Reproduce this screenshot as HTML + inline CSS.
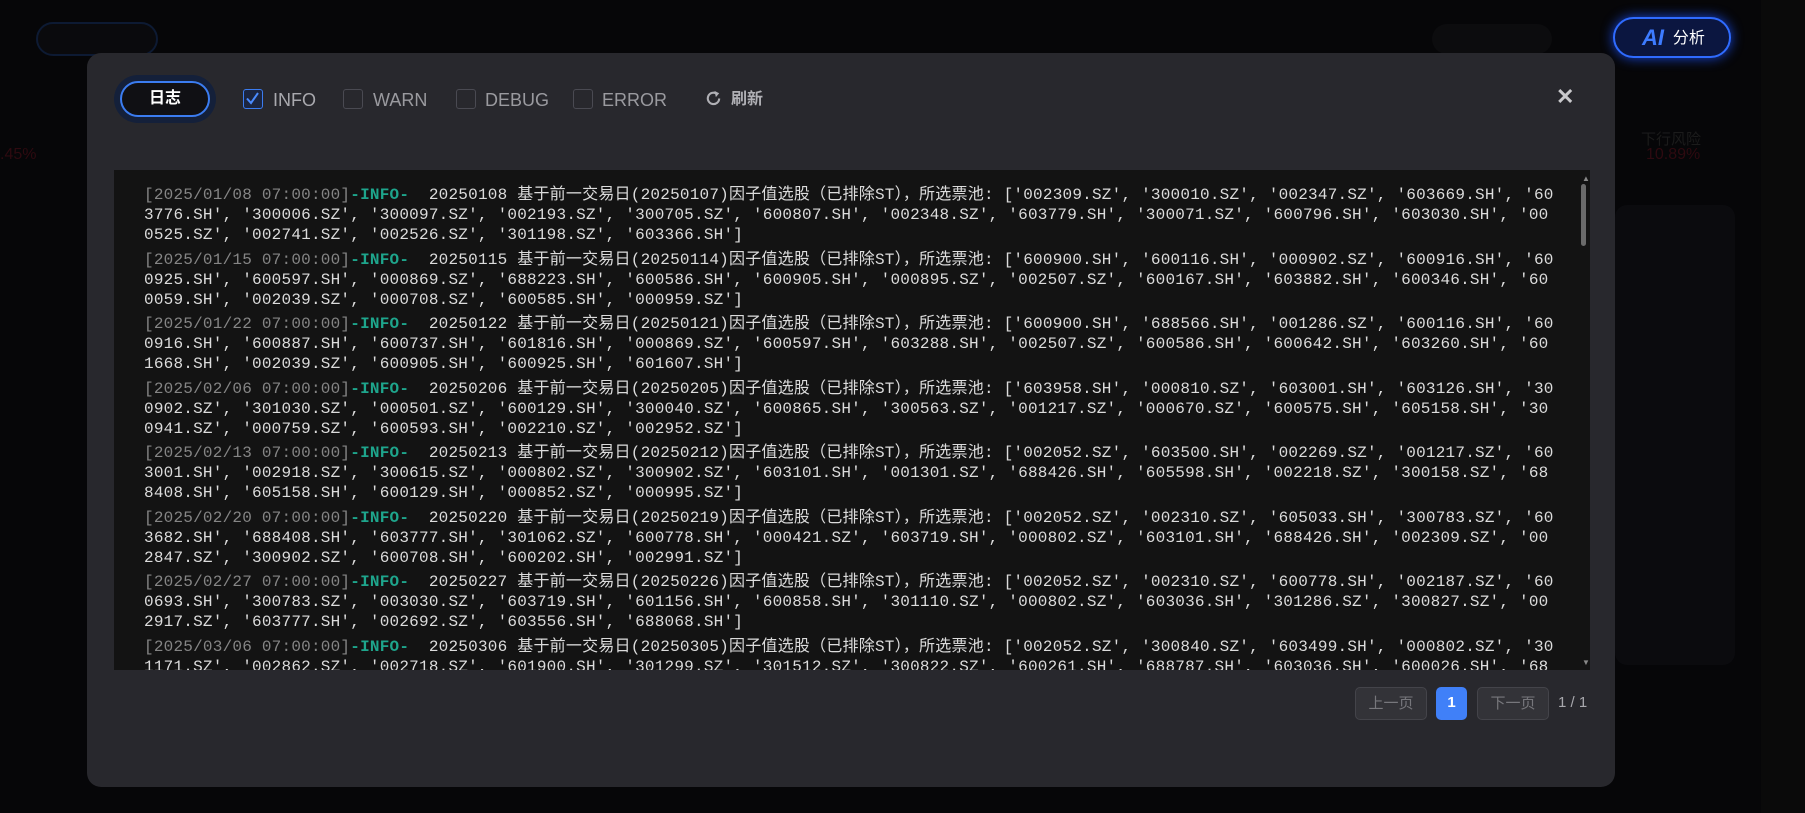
<!DOCTYPE html>
<html><head><meta charset="utf-8"><style>
*{margin:0;padding:0;box-sizing:border-box}
body{width:1805px;height:813px;background:#060608;overflow:hidden;position:relative;font-family:"Liberation Sans","Noto Sans CJK SC",sans-serif}
.abs{position:absolute}
.modal{left:87px;top:53px;width:1528px;height:734px;background:#28282d;border-radius:14px}
.logbtn{left:120px;top:81px;width:90px;height:36px;border-radius:18px;border:2px solid #3b7cf0;background:#101014;color:#fff;font-weight:bold;font-size:16px;text-align:center;line-height:32px;box-shadow:0 0 0 6px #14203a}
.cb{top:89px;width:20px;height:20px;border:1.5px solid #4a4a52;border-radius:3px}
.lbl{top:89px;font-size:18px;color:#9a9a9f;line-height:22px}
.log{left:114px;top:170px;width:1476px;height:500px;background:#131313;overflow:hidden}
.txt{position:absolute;left:30px;top:15px;font-family:"Liberation Mono","Noto Sans CJK SC",monospace;font-size:16px;line-height:20px;color:#dcdcdc;letter-spacing:0.22px}
.e{margin-bottom:4.5px;white-space:pre}
.t{color:#858585}.i{color:#1ea58c;font-weight:bold}
.pg{top:687px;height:33px;border-radius:5px;font-size:15px;text-align:center;line-height:31px}
</style></head><body>
<div class="abs" style="left:36px;top:22px;width:122px;height:34px;border-radius:17px;border:2px solid #0d1a33;background:#0a0a0d"></div>
<div class="abs" style="left:1432px;top:24px;width:120px;height:30px;border-radius:15px;background:#0c0c0e"></div>
<div class="abs" style="left:1641px;top:128px;font-size:15px;color:#1b1b1b">下行风险</div>
<div class="abs" style="left:1646px;top:146px;font-size:16px;color:#2e0a10">10.89%</div>
<div class="abs" style="left:0;top:146px;font-size:16px;color:#2e0a10">.45%</div>
<div class="abs" style="left:1615px;top:205px;width:120px;height:460px;background:#0b0b0e;border-radius:12px"></div>
<div class="abs" style="left:1761px;top:0;width:44px;height:813px;background:#0a0a0a"></div>
<div class="abs" style="left:1613px;top:17px;width:118px;height:41px;border-radius:21px;border:2px solid #2f6bff;background:#0b1640;box-shadow:0 0 12px #1846d8;color:#fff;line-height:37px;padding-left:27px;font-size:16px"><span style="color:#3d7bff;font-style:italic;font-size:22px;font-weight:bold;vertical-align:-2px">AI</span>&nbsp; 分析</div>
<div class="modal abs"></div>
<div class="logbtn abs">日志</div>
<div class="cb abs" style="left:243px;border-color:#3b7cf0;background:#1b2540"><svg width="17" height="17" viewBox="0 0 17 17" style="position:absolute;left:0;top:0"><path d="M3 8.5 L7 13 L14 3" stroke="#4a8bff" stroke-width="2" fill="none"/></svg></div>
<div class="lbl abs" style="left:273px;color:#a9a9ae">INFO</div>
<div class="cb abs" style="left:343px"></div><div class="lbl abs" style="left:373px">WARN</div>
<div class="cb abs" style="left:456px"></div><div class="lbl abs" style="left:485px">DEBUG</div>
<div class="cb abs" style="left:573px"></div><div class="lbl abs" style="left:602px">ERROR</div>
<svg class="abs" style="left:704px;top:89px" width="19" height="19" viewBox="0 0 20 20"><path d="M16 10 A6 6 0 1 1 13.5 5" stroke="#b0b0b5" stroke-width="2.2" fill="none"/><path d="M11 2 L16 4.5 L12.5 8.5 Z" fill="#b0b0b5"/></svg>
<div class="lbl abs" style="left:731px;font-size:16px;color:#b0b0b5;font-weight:bold">刷新</div>
<div class="abs" style="left:1556px;top:84px;color:#c9c9cc;font-size:22px;font-weight:bold">✕</div>
<div class="log abs"><div class="txt">
<div class="e"><span class="t">[2025/01/08 07:00:00]</span><span class="i">-INFO-</span>  20250108 基于前一交易日(20250107)因子值选股（已排除ST），所选票池: ['002309.SZ', '300010.SZ', '002347.SZ', '603669.SH', '60
3776.SH', '300006.SZ', '300097.SZ', '002193.SZ', '300705.SZ', '600807.SH', '002348.SZ', '603779.SH', '300071.SZ', '600796.SH', '603030.SH', '00
0525.SZ', '002741.SZ', '002526.SZ', '301198.SZ', '603366.SH']</div>
<div class="e"><span class="t">[2025/01/15 07:00:00]</span><span class="i">-INFO-</span>  20250115 基于前一交易日(20250114)因子值选股（已排除ST），所选票池: ['600900.SH', '600116.SH', '000902.SZ', '600916.SH', '60
0925.SH', '600597.SH', '000869.SZ', '688223.SH', '600586.SH', '600905.SH', '000895.SZ', '002507.SZ', '600167.SH', '603882.SH', '600346.SH', '60
0059.SH', '002039.SZ', '000708.SZ', '600585.SH', '000959.SZ']</div>
<div class="e"><span class="t">[2025/01/22 07:00:00]</span><span class="i">-INFO-</span>  20250122 基于前一交易日(20250121)因子值选股（已排除ST），所选票池: ['600900.SH', '688566.SH', '001286.SZ', '600116.SH', '60
0916.SH', '600887.SH', '600737.SH', '601816.SH', '000869.SZ', '600597.SH', '603288.SH', '002507.SZ', '600586.SH', '600642.SH', '603260.SH', '60
1668.SH', '002039.SZ', '600905.SH', '600925.SH', '601607.SH']</div>
<div class="e"><span class="t">[2025/02/06 07:00:00]</span><span class="i">-INFO-</span>  20250206 基于前一交易日(20250205)因子值选股（已排除ST），所选票池: ['603958.SH', '000810.SZ', '603001.SH', '603126.SH', '30
0902.SZ', '301030.SZ', '000501.SZ', '600129.SH', '300040.SZ', '600865.SH', '300563.SZ', '001217.SZ', '000670.SZ', '600575.SH', '605158.SH', '30
0941.SZ', '000759.SZ', '600593.SH', '002210.SZ', '002952.SZ']</div>
<div class="e"><span class="t">[2025/02/13 07:00:00]</span><span class="i">-INFO-</span>  20250213 基于前一交易日(20250212)因子值选股（已排除ST），所选票池: ['002052.SZ', '603500.SH', '002269.SZ', '001217.SZ', '60
3001.SH', '002918.SZ', '300615.SZ', '000802.SZ', '300902.SZ', '603101.SH', '001301.SZ', '688426.SH', '605598.SH', '002218.SZ', '300158.SZ', '68
8408.SH', '605158.SH', '600129.SH', '000852.SZ', '000995.SZ']</div>
<div class="e"><span class="t">[2025/02/20 07:00:00]</span><span class="i">-INFO-</span>  20250220 基于前一交易日(20250219)因子值选股（已排除ST），所选票池: ['002052.SZ', '002310.SZ', '605033.SH', '300783.SZ', '60
3682.SH', '688408.SH', '603777.SH', '301062.SZ', '600778.SH', '000421.SZ', '603719.SH', '000802.SZ', '603101.SH', '688426.SH', '002309.SZ', '00
2847.SZ', '300902.SZ', '600708.SH', '600202.SH', '002991.SZ']</div>
<div class="e"><span class="t">[2025/02/27 07:00:00]</span><span class="i">-INFO-</span>  20250227 基于前一交易日(20250226)因子值选股（已排除ST），所选票池: ['002052.SZ', '002310.SZ', '600778.SH', '002187.SZ', '60
0693.SH', '300783.SZ', '003030.SZ', '603719.SH', '601156.SH', '600858.SH', '301110.SZ', '000802.SZ', '603036.SH', '301286.SZ', '300827.SZ', '00
2917.SZ', '603777.SH', '002692.SZ', '603556.SH', '688068.SH']</div>
<div class="e"><span class="t">[2025/03/06 07:00:00]</span><span class="i">-INFO-</span>  20250306 基于前一交易日(20250305)因子值选股（已排除ST），所选票池: ['002052.SZ', '300840.SZ', '603499.SH', '000802.SZ', '30
1171.SZ', '002862.SZ', '002718.SZ', '601900.SH', '301299.SZ', '301512.SZ', '300822.SZ', '600261.SH', '688787.SH', '603036.SH', '600026.SH', '68</div>
</div>
<div class="abs" style="left:1468px;top:4px;color:#888;font-size:8px">▲</div>
<div class="abs" style="left:1467px;top:14px;width:5px;height:62px;background:#6a6a6a;border-radius:3px"></div>
<div class="abs" style="left:1468px;top:488px;color:#888;font-size:8px">▼</div>
</div>
<div class="pg abs" style="left:1355px;width:72px;border:1px solid #44444a;background:#333338;color:#77777c">上一页</div>
<div class="pg abs" style="left:1436px;width:31px;background:#4080f8;color:#fff;font-weight:bold">1</div>
<div class="pg abs" style="left:1477px;width:72px;border:1px solid #44444a;background:#333338;color:#77777c">下一页</div>
<div class="abs" style="left:1558px;top:694px;font-size:15px;color:#a8a8ad">1 / 1</div>
</body></html>
